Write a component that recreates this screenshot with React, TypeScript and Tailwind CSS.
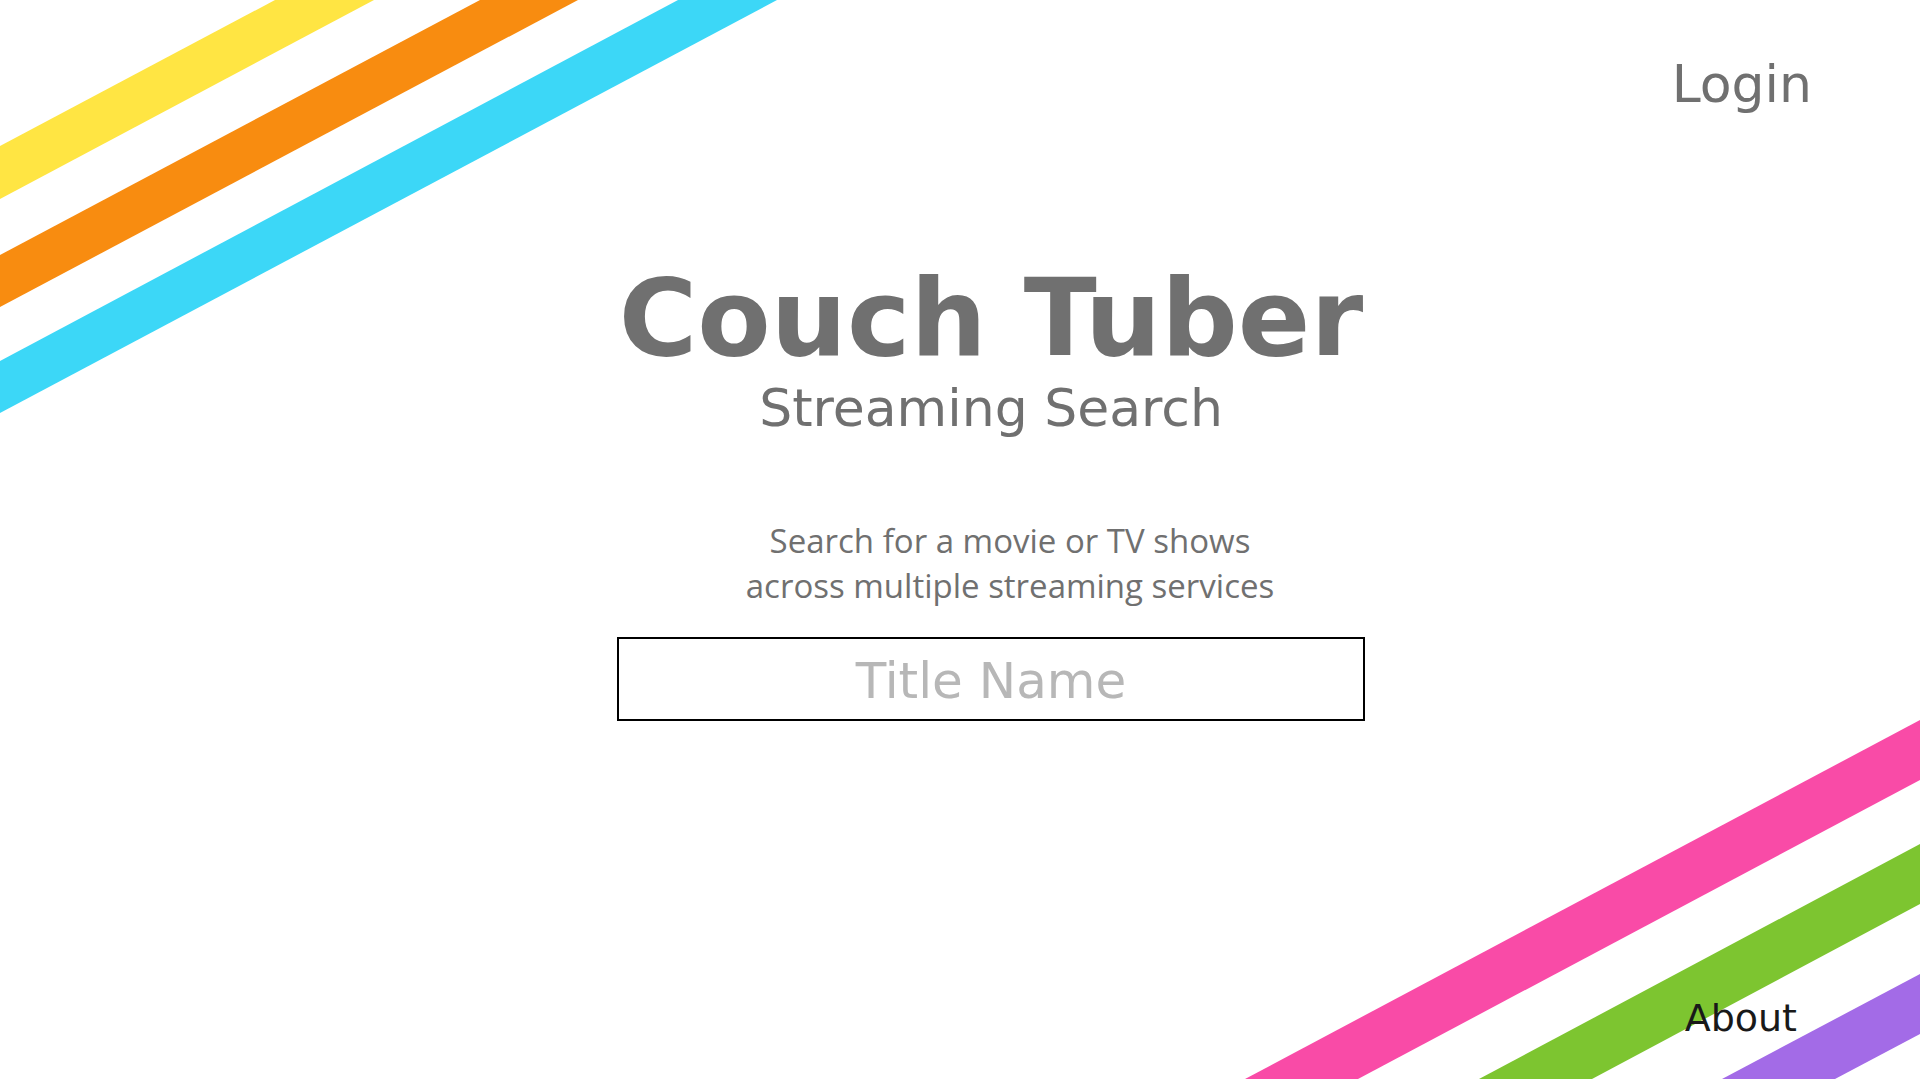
import React, { useState } from "react";

type Stripe = { color: string; points: string };

const topStripes: Stripe[] = [
  { color: "#ffe543", points: "0,146 275,0 374,0 0,199" },
  { color: "#f88c10", points: "0,255 480,0 578,0 0,307" },
  { color: "#3cd7f7", points: "0,361 678,0 777,0 0,413" },
];

const bottomStripes: Stripe[] = [
  { color: "#f94ba7", points: "0,359 675,0 675,60 113,359" },
  { color: "#7dc530", points: "234,359 675,124 675,184 347,359" },
  { color: "#a36be7", points: "477,359 675,254 675,314 590,359" },
];

function Stripes({ stripes, width, height, className }: { stripes: Stripe[]; width: number; height: number; className: string }) {
  return (
    <svg className={className} width={width} height={height} viewBox={`0 0 ${width} ${height}`} aria-hidden="true">
      {stripes.map((s) => (
        <polygon key={s.color} points={s.points} fill={s.color} />
      ))}
    </svg>
  );
}

export default function App() {
  const [title, setTitle] = useState("");

  return (
    <div className="relative flex min-h-screen flex-col overflow-hidden bg-white font-['DejaVu_Sans',sans-serif] text-[#707070]">
      <Stripes stripes={topStripes} width={777} height={413} className="pointer-events-none absolute left-0 top-0" />
      <Stripes stripes={bottomStripes} width={675} height={359} className="pointer-events-none absolute bottom-0 right-0" />

      <header className="relative flex justify-end pr-[108px] pt-[54px]">
        <a href="#login" className="text-[52px] leading-[60px]">
          Login
        </a>
      </header>

      <main className="relative mt-[144px] flex flex-col items-center pl-[62px] text-center">
        <h1 className="text-[107px] font-bold leading-[120px]">Couch Tuber</h1>
        <h2 className="text-[52px] leading-[60px]">Streaming Search</h2>
        <form className="flex w-full flex-col items-center" onSubmit={(e) => e.preventDefault()}>
          <label
            htmlFor="title-name"
            className="mt-[80px] pl-[38px] font-['Open_Sans',sans-serif] text-[33px] leading-[45px]"
          >
            Search for a movie or TV shows
            <br />
            across multiple streaming services
          </label>
          <input
            id="title-name"
            type="text"
            value={title}
            onChange={(e) => setTitle(e.target.value)}
            placeholder="Title Name"
            className="mt-[29px] h-[84px] w-full max-w-[748px] border-2 border-black bg-white pt-1 text-center text-[50px] placeholder:text-[#b7b7b7]"
          />
        </form>
      </main>

      <footer className="relative mt-auto flex justify-end pb-[37px] pr-[123px]">
        <a href="#about" className="text-[38px] leading-[48px] text-[#191919]">
          About
        </a>
      </footer>
    </div>
  );
}
